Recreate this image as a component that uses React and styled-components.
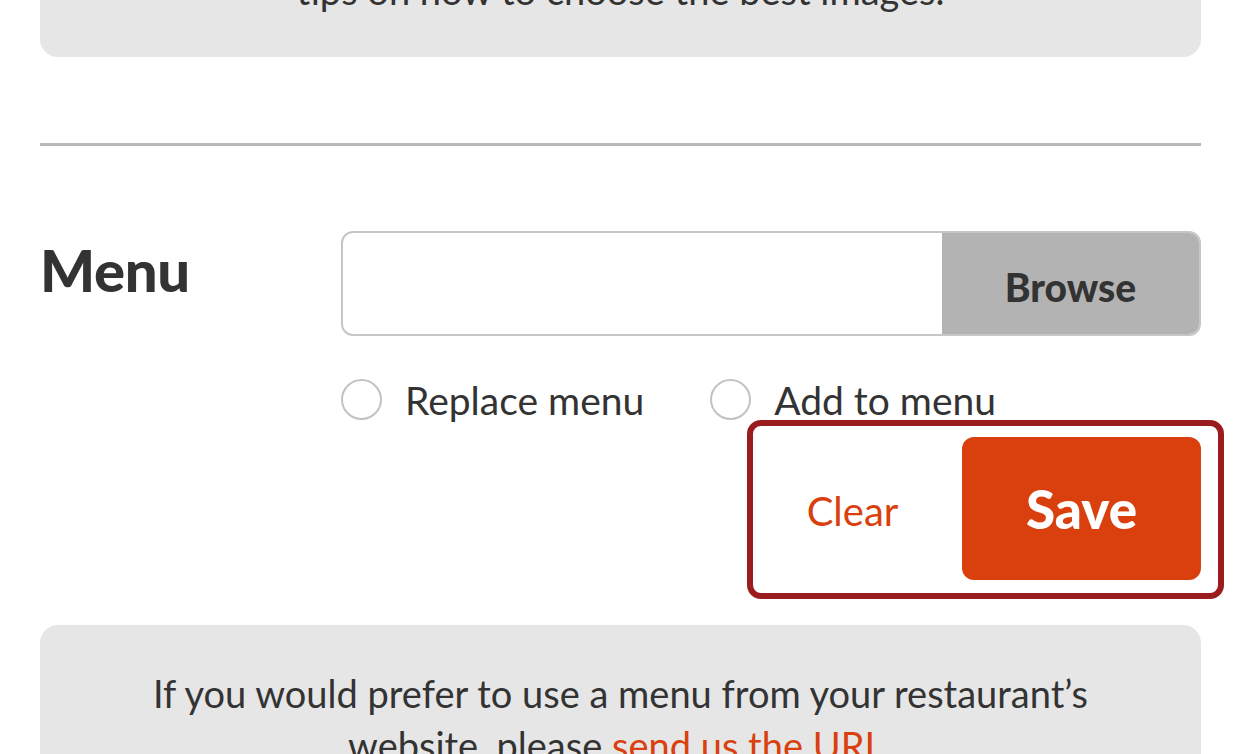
import React, { useState } from 'react'
import styled, { createGlobalStyle } from 'styled-components'

const GlobalStyle = createGlobalStyle`
  html, body {
    margin: 0;
    padding: 0;
    background: #fff;
  }
  body {
    font-family: Lato, "Open Sans", "Liberation Sans", sans-serif;
    color: #333;
    overflow: hidden;
  }
`

const Page = styled.div`
  width: 1242px;
  height: 754px;
  overflow: hidden;
  padding: 0 41px 0 40px;
  box-sizing: border-box;
`

const InfoBox = styled.div`
  background: #e6e6e6;
  border-radius: 18px;
  text-align: center;
  font-size: 38px;
  line-height: 52px;
  color: #333;
  padding: ${({ $top }) => ($top ? '0 60px 41px' : '42px 60px 40px')};
  margin-top: ${({ $top }) => ($top ? '-36px' : '0')};

  a {
    color: #d9400e;
    text-decoration: none;
  }
`

const Divider = styled.hr`
  border: none;
  height: 3px;
  background: #b8b8b8;
  margin: 86px 0 85px;
`

const FieldRow = styled.div`
  display: grid;
  grid-template-columns: 301px 1fr;
`

const Label = styled.h2`
  margin: 0;
  font-size: 58px;
  font-weight: 900;
  color: #333;
  line-height: 78px;
  letter-spacing: -0.3px;
`

const FieldColumn = styled.div`
  display: flex;
  flex-direction: column;
`

const FileInput = styled.div`
  display: flex;
  height: 105px;
  border: 2px solid #c6c6c6;
  border-radius: 12px;
  overflow: hidden;
  box-sizing: border-box;
  background: #fff;
`

const FileName = styled.div`
  flex: 1;
`

const BrowseButton = styled.button`
  width: 257px;
  border: none;
  background: #b3b3b3;
  font-family: inherit;
  font-size: 39px;
  font-weight: 900;
  color: #333;
  padding-top: 8px;
  cursor: pointer;
`

const RadioRow = styled.div`
  display: flex;
  align-items: center;
  gap: 66px;
  margin-top: 43px;
  height: 41px;
`

const RadioOption = styled.label`
  display: flex;
  align-items: center;
  gap: 23px;
  font-size: 39px;
  color: #333;
  cursor: pointer;
`

const RadioCircle = styled.span`
  width: 41px;
  height: 41px;
  border-radius: 50%;
  border: 2px solid #c2c2c2;
  box-sizing: border-box;
  background: #fff;
  display: flex;
  align-items: center;
  justify-content: center;

  &::after {
    content: '';
    width: 19px;
    height: 19px;
    border-radius: 50%;
    background: ${({ $checked }) => ($checked ? '#d9400e' : 'transparent')};
  }
`

const ActionBox = styled.div`
  align-self: flex-end;
  width: 477px;
  height: 179px;
  margin-right: -23px;
  box-sizing: border-box;
  border: 6px solid #9b1c1f;
  border-radius: 14px;
  display: flex;
  padding: 11px 17px 13px 0;
`

const ClearButton = styled.button`
  flex: 1;
  border: none;
  background: transparent;
  font-family: inherit;
  font-size: 40px;
  color: #d9400e;
  padding: 4px 10px 0 0;
  cursor: pointer;
`

const SaveButton = styled.button`
  width: 239px;
  border: none;
  border-radius: 12px;
  background: #d9400e;
  color: #fff;
  font-family: inherit;
  font-size: 53px;
  font-weight: 900;
  padding-top: 0;
  cursor: pointer;
`

const BottomSpacer = styled.div`
  height: 26px;
`

export default function App() {
  const [mode, setMode] = useState(null)

  return (
    <>
      <GlobalStyle />
      <Page>
        <InfoBox $top>tips on how to choose the best images.</InfoBox>
        <Divider />
        <FieldRow>
          <Label>Menu</Label>
          <FieldColumn>
            <FileInput>
              <FileName />
              <BrowseButton type="button">Browse</BrowseButton>
            </FileInput>
            <RadioRow>
              <RadioOption onClick={() => setMode('replace')}>
                <RadioCircle $checked={mode === 'replace'} />
                Replace menu
              </RadioOption>
              <RadioOption onClick={() => setMode('add')}>
                <RadioCircle $checked={mode === 'add'} />
                Add to menu
              </RadioOption>
            </RadioRow>
            <ActionBox>
              <ClearButton type="button" onClick={() => setMode(null)}>
                Clear
              </ClearButton>
              <SaveButton type="button">Save</SaveButton>
            </ActionBox>
          </FieldColumn>
        </FieldRow>
        <BottomSpacer />
        <InfoBox>
          If you would prefer to use a menu from your restaurant’s
          <br />
          website, please <a href="#url">send us the URL</a>.
        </InfoBox>
      </Page>
    </>
  )
}
